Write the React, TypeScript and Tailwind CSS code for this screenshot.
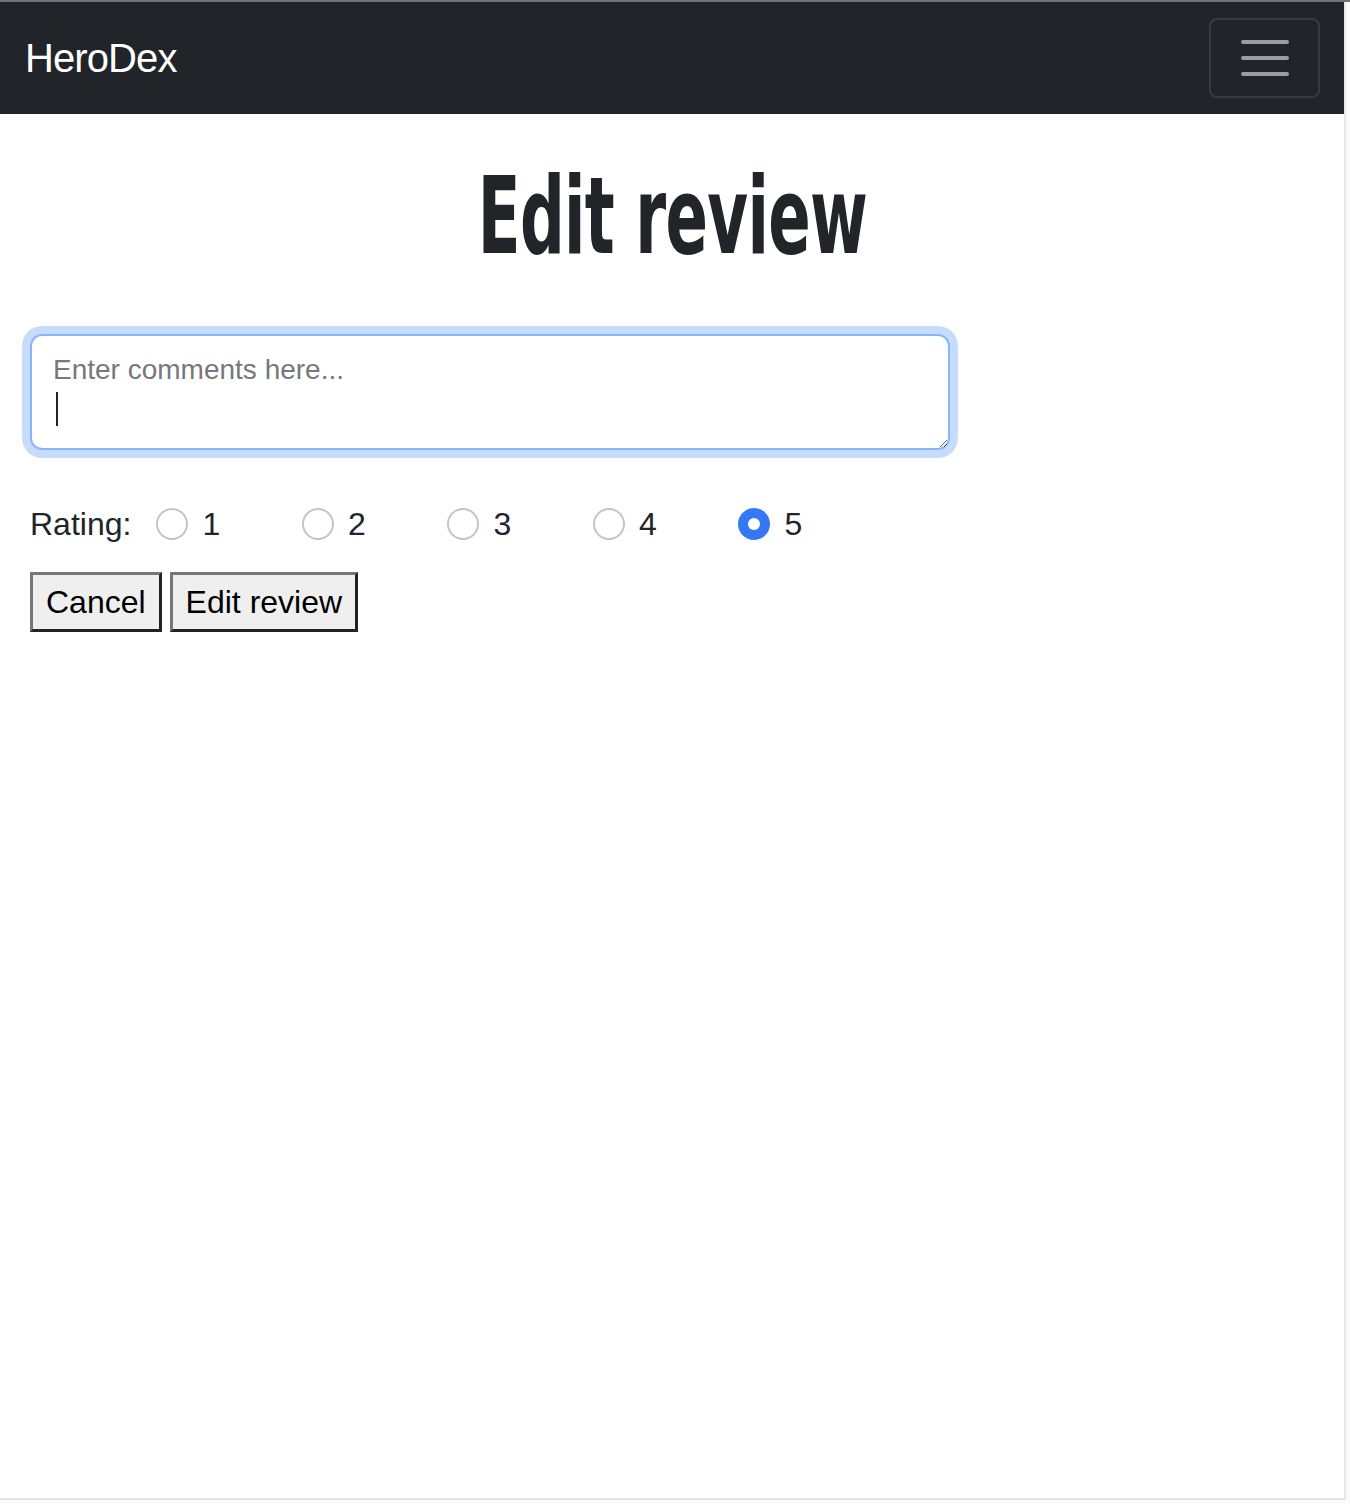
import { useState } from 'react';

const ratings = [1, 2, 3, 4, 5];

function Navbar() {
  return (
    <nav className="flex h-[112px] items-center justify-between bg-[#212529] pl-[25px] pr-[24px]">
      <a href="#" className="text-[40px] leading-none text-white tracking-[-0.9px]">
        HeroDex
      </a>
      <button
        aria-label="Toggle navigation"
        className="flex h-[80px] w-[111px] flex-col items-center justify-center gap-[12px] rounded-[8px] border-2 border-white/10"
      >
        <span className="block h-[4px] w-[48px] rounded-full bg-[#9b9c9e]" />
        <span className="block h-[4px] w-[48px] rounded-full bg-[#9b9c9e]" />
        <span className="block h-[4px] w-[48px] rounded-full bg-[#9b9c9e]" />
      </button>
    </nav>
  );
}

function Radio({ checked, onClick }: { checked: boolean; onClick: () => void }) {
  return (
    <button
      onClick={onClick}
      className={
        checked
          ? 'flex h-[32px] w-[32px] items-center justify-center rounded-full bg-[#3478f6]'
          : 'h-[32px] w-[32px] rounded-full border-2 border-[#c4c4c4] bg-white'
      }
    >
      {checked && <span className="block h-[12px] w-[12px] rounded-full bg-white" />}
    </button>
  );
}

export default function App() {
  const [rating, setRating] = useState(5);
  const [comment, setComment] = useState('');

  return (
    <div className="flex h-[1504px] w-full flex-col bg-[#fafafa] font-['Liberation_Sans',Arial,sans-serif] text-[#212529]">
      <div className="h-[2px] bg-[#6b737b]" />
      <div className="flex h-[1498px]">
        <div className="flex w-[1344px] flex-col border-b-2 border-[#e3e3e3] bg-white">
          <Navbar />
          <main className="flex flex-col px-[30px]">
            <h1 className="mt-[49px] flex h-[107px] justify-center font-['Liberation_Sans_Narrow','DejaVu_Sans_Condensed',sans-serif] text-[107px] font-bold leading-none">
              <span className="inline-block origin-center scale-x-[0.65] tracking-[-1px]">Edit review</span>
            </h1>

            <div className="relative mt-[64px] w-[920px]">
              <textarea
                value={comment}
                onChange={(e) => setComment(e.target.value)}
                placeholder="Enter comments here..."
                className="block h-[116px] w-full resize-y rounded-[12px] border-2 border-[#86b7fe] bg-white px-[21px] pt-[16px] pb-[8px] text-[28px] leading-[36px] text-[#212529] shadow-[0_0_0_8px_#c7dbfd] outline-none placeholder:text-[#74797e]"
              />
              <span className="pointer-events-none absolute left-[26px] top-[58px] block h-[34px] w-[2px] bg-[#212529]" />
            </div>

            <div className="mt-[58px] flex items-center text-[32px] leading-none">
              <span className="mr-[25px]">Rating:</span>
              {ratings.map((r) => (
                <label key={r} className="flex w-[145.5px] items-center">
                  <Radio checked={rating === r} onClick={() => setRating(r)} />
                  <span className="ml-[14px]">{r}</span>
                </label>
              ))}
            </div>

            <div className="mt-[32px] flex gap-[8px]">
              <button className="h-[60px] border-[3px] border-b-[#222] border-l-[#777] border-r-[#222] border-t-[#777] bg-[#efefef] px-[13px] text-[32px] text-black">
                Cancel
              </button>
              <button className="h-[60px] border-[3px] border-b-[#222] border-l-[#777] border-r-[#222] border-t-[#777] bg-[#efefef] px-[13px] text-[32px] text-black">
                Edit review
              </button>
            </div>
          </main>
        </div>
        <div className="flex-1 border-l-2 border-[#e6e6e6]" />
      </div>
    </div>
  );
}
